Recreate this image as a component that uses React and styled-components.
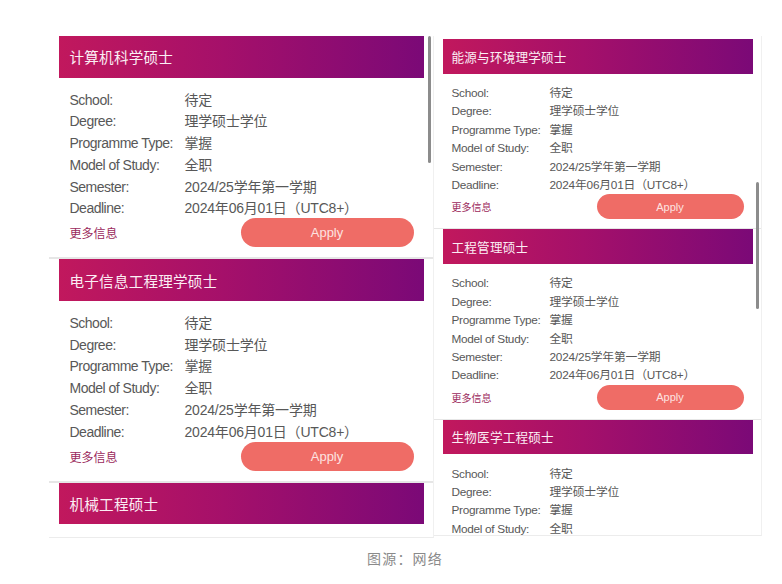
import React from "react";
import styled, { createGlobalStyle } from "styled-components";

const Global = createGlobalStyle`
  html, body { margin: 0; padding: 0; background: #ffffff; }
  body { font-family: "Liberation Sans", "Noto Sans CJK SC", sans-serif; }
`;

const SIZES = {
  lg: {
    panelW: 385, panelH: 502, padTop: 0, cardPad: "0 9px 0 10px", headerH: 41.5,
    titleSize: 14.6, titlePad: 11, bodyPad: "10px 10px 10px 11px", rowH: 21.8, lineH: 24.4,
    font: 14, labelW: 115, labelLs: -0.5, moreSize: 12, btnW: 173, btnH: 29,
    btnFont: 13, sep: 2,
  },
  sm: {
    panelW: 328, panelH: 500, padTop: 3, cardPad: "0 8px 0 9px", headerH: 34.5,
    titleSize: 12.6, titlePad: 9, bodyPad: "10.5px 9px 9px 9px", rowH: 18.4, lineH: 18.8,
    font: 11.8, labelW: 98, labelLs: -0.3, moreSize: 10, btnW: 147, btnH: 25,
    btnFont: 11, sep: 1,
  },
};

const Page = styled.div`
  width: 782px;
  height: 584px;
  display: flex;
  flex-direction: column;
  align-items: center;
  padding-top: 36px;
  box-sizing: border-box;
`;

const Panels = styled.div`
  display: flex;
  align-items: flex-start;
  margin-left: 28px;
`;

const Panel = styled.div`
  position: relative;
  width: ${(p) => SIZES[p.$s].panelW}px;
  height: ${(p) => SIZES[p.$s].panelH}px;
  padding-top: ${(p) => SIZES[p.$s].padTop}px;
  box-sizing: border-box;
  overflow: hidden;
  background: #fff;
  border-bottom: 1px solid #ececec;
  border-right: 1px solid #f0f0f0;
`;

const Scrollbar = styled.div`
  position: absolute;
  right: ${(p) => p.$right}px;
  top: ${(p) => p.$top}px;
  width: 3px;
  height: ${(p) => p.$h}px;
  border-radius: 2px;
  background: #8c8c8c;
`;

const Card = styled.section`
  padding: ${(p) => SIZES[p.$s].cardPad};
  border-bottom: ${(p) => (p.$last ? "none" : `${SIZES[p.$s].sep}px solid #e6e6e6`)};
  background: #fff;
`;

const Header = styled.h2`
  margin: 0;
  height: ${(p) => SIZES[p.$s].headerH}px;
  display: flex;
  align-items: center;
  padding-left: ${(p) => SIZES[p.$s].titlePad}px;
  background: linear-gradient(90deg, #c1185d 0%, #a5106a 45%, #7b0977 100%);
  color: #fbeef4;
  font-size: ${(p) => SIZES[p.$s].titleSize}px;
  font-weight: 400;
  letter-spacing: 0.2px;
`;

const Body = styled.div`
  padding: ${(p) => SIZES[p.$s].bodyPad};
`;

const Rows = styled.dl`
  margin: 0;
  display: grid;
  grid-template-columns: ${(p) => SIZES[p.$s].labelW}px 1fr;
  grid-auto-rows: ${(p) => SIZES[p.$s].rowH}px;
  font-size: ${(p) => SIZES[p.$s].font}px;
  line-height: ${(p) => SIZES[p.$s].lineH}px;
  color: #585858;
`;

const Label = styled.dt`
  margin: 0;
  white-space: nowrap;
  letter-spacing: ${(p) => SIZES[p.$s].labelLs}px;
`;

const Value = styled.dd`
  margin: 0;
  white-space: nowrap;
  letter-spacing: -0.2px;
`;

const Footer = styled.div`
  display: flex;
  align-items: center;
  justify-content: space-between;
`;

const More = styled.a`
  font-size: ${(p) => SIZES[p.$s].moreSize}px;
  color: #9b2a5c;
  text-decoration: none;
`;

const ApplyButton = styled.button`
  width: ${(p) => SIZES[p.$s].btnW}px;
  height: ${(p) => SIZES[p.$s].btnH}px;
  border: none;
  border-radius: 999px;
  background: #ef6c66;
  color: #fde3e1;
  font-family: "Liberation Sans", sans-serif;
  font-size: ${(p) => SIZES[p.$s].btnFont}px;
  padding: 0;
`;

const Caption = styled.p`
  margin: 11px 0 0 28px;
  font-size: 14px;
  line-height: 20px;
  color: #8a8a8a;
  letter-spacing: 1.2px;
`;

const FIELDS = [
  ["School:", "待定"],
  ["Degree:", "理学硕士学位"],
  ["Programme Type:", "掌握"],
  ["Model of Study:", "全职"],
  ["Semester:", "2024/25学年第一学期"],
  ["Deadline:", "2024年06月01日（UTC8+）"],
];

function Programme({ s, title, rows = 6, footer = true, body = true, last = false }) {
  return (
    <Card $s={s} $last={last}>
      <Header $s={s}>{title}</Header>
      {body && (
        <Body $s={s}>
          <Rows $s={s}>
            {FIELDS.slice(0, rows).map(([k, v]) => (
              <React.Fragment key={k}>
                <Label $s={s}>{k}</Label>
                <Value $s={s}>{v}</Value>
              </React.Fragment>
            ))}
          </Rows>
          {footer && (
            <Footer>
              <More $s={s}>更多信息</More>
              <ApplyButton $s={s}>Apply</ApplyButton>
            </Footer>
          )}
        </Body>
      )}
    </Card>
  );
}

export default function App() {
  return (
    <>
      <Global />
      <Page>
        <Panels>
          <Panel $s="lg">
            <Programme s="lg" title="计算机科学硕士" />
            <Programme s="lg" title="电子信息工程理学硕士" />
            <Programme s="lg" title="机械工程硕士" body={false} last />
            <Scrollbar $right={2} $top={0} $h={127} />
          </Panel>
          <Panel $s="sm">
            <Programme s="sm" title="能源与环境理学硕士" />
            <Programme s="sm" title="工程管理硕士" />
            <Programme s="sm" title="生物医学工程硕士" rows={4} footer={false} last />
            <Scrollbar $right={2} $top={146} $h={127} />
          </Panel>
        </Panels>
        <Caption>图源：网络</Caption>
      </Page>
    </>
  );
}
